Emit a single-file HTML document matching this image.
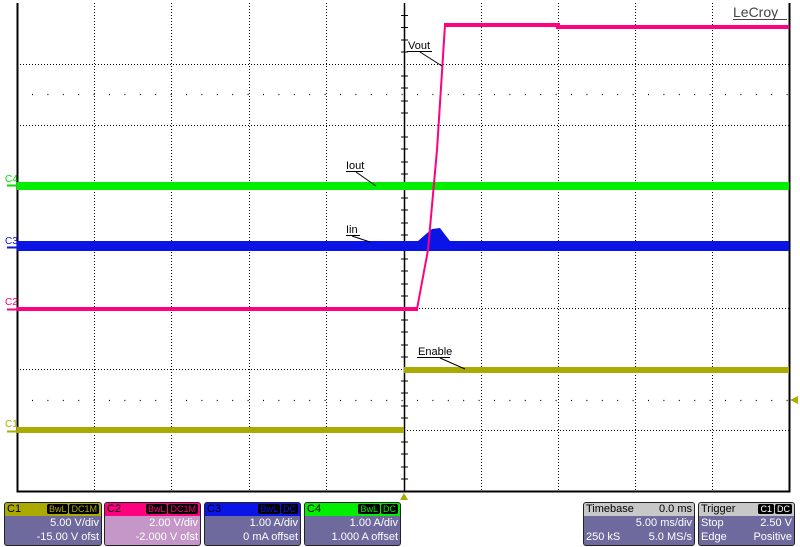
<!DOCTYPE html>
<html><head><style>
body{margin:0;width:800px;height:547px;background:#fff;overflow:hidden;font-family:"Liberation Sans",sans-serif;position:relative}
svg{position:absolute;left:0;top:0}
.p{position:absolute;top:502px;height:44px;border:1px solid #222;border-radius:3px;background:#6e6a9e;color:#fff;font-size:11px;box-sizing:border-box}
.h{height:13px;line-height:13px;padding-left:2px;color:#000;position:relative;border-radius:2px 2px 0 0}
.b{position:absolute;right:2px;top:1px;font-size:9px;line-height:10px}
.b span{background:#000;padding:0 2px;border-radius:2px;margin-left:1px}
.r{text-align:right;padding-right:2px;line-height:14px}
.l{position:absolute;left:2px}
</style></head><body>
<svg width="800" height="547" viewBox="0 0 800 547">
<g stroke="#000" stroke-width="1" stroke-dasharray="1,2" fill="none">
<path d="M94.5 3V491M171.5 3V491M249.5 3V491M326.5 3V491M481.5 3V491M558.5 3V491M635.5 3V491M712.5 3V491"/>
<path d="M17 64.5H789M17 125.5H789M17 186.5H789M17 308.5H789M17 369.5H789M17 430.5H789"/>
</g>
<g stroke="#000" stroke-width="1.3" stroke-dasharray="1,14.4" fill="none">
<path d="M32 94.5H789M32 400.5H789"/>
</g>
<path d="M17.5 3V491.5H789.5V3" stroke="#000" stroke-width="2" fill="none"/>
<path d="M404.5 3V491" stroke="#000" stroke-width="1.5"/>
<path d="M17 247.5H789" stroke="#000" stroke-width="1" stroke-dasharray="1,2"/>
<g stroke="#000" stroke-width="1">
<path d="M401 15.5h7M401 27.5h7M401 40h7M401 52h7M401 76h7M401 88h7M401 101h7M401 113h7M401 137h7M401 149h7M401 162h7M401 174h7M401 198h7M401 210h7M401 223h7M401 235h7M401 259h7M401 271h7M401 284h7M401 296h7M401 320h7M401 332h7M401 345h7M401 357h7M401 381h7M401 393h7M401 406h7M401 418h7M401 442h7M401 454h7M401 467h7M401 479h7"/>
</g>
<rect x="17" y="182" width="772" height="8" fill="#00ee00"/>
<rect x="17" y="241" width="772" height="10" fill="#0a14e6"/>
<path d="M418 241 L426 234 L432 229 L440 228 L446 236 L450 241 Z" fill="#0a14e6"/>
<rect x="17" y="427" width="387" height="6" fill="#aaaa00"/>
<rect x="404" y="367" width="385" height="6" fill="#aaaa00"/>
<path d="M17 309H418" stroke="#ff007f" stroke-width="4"/>
<path d="M417 309L428 250L437 150L445 25" stroke="#ff007f" stroke-width="2" fill="none"/>
<path d="M444 25H558V27H789" stroke="#ff007f" stroke-width="4" fill="none"/>
<g font-size="11" font-family="Liberation Sans,sans-serif" fill="#000">
<text x="408" y="49">Vout</text><path d="M407 51.5h25M420 52L442 66" stroke="#000"/>
<text x="346" y="169">Iout</text><path d="M346 171.5h17M356 172L376 186" stroke="#000"/>
<text x="346" y="233">Iin</text><path d="M346 235.5h14M352 236L370 242" stroke="#000"/>
<text x="418" y="355">Enable</text><path d="M417 357.5h33M440 358L465 369" stroke="#000"/>
</g>
<text x="733" y="17" font-size="14" fill="#444" font-family="Liberation Sans,sans-serif">LeCroy</text>
<path d="M733 19.5h54" stroke="#444"/>
<g font-size="10" font-family="Liberation Sans,sans-serif">
<text x="5" y="182" fill="#00dd00">C4</text><path d="M7 185.5h10" stroke="#00dd00" stroke-width="2"/>
<text x="5" y="244" fill="#0a14e6">C3</text><path d="M7 247.5h10" stroke="#0a14e6" stroke-width="2"/>
<text x="5" y="305" fill="#ff007f">C2</text><path d="M7 309.5h10" stroke="#ff007f" stroke-width="2"/>
<text x="5" y="427" fill="#aaaa00">C1</text><path d="M7 431.5h10" stroke="#aaaa00" stroke-width="2"/>
</g>
<path d="M790 400l8-4v8z" fill="#aaaa00"/>
<path d="M404 493l-4 7h8z" fill="#aaaa00"/>
</svg>
<div class="p" style="left:4px;width:98px"><div class="h" style="background:#aaaa00">C1<div class="b"><span style="color:#aaaa00">BwL</span><span style="color:#aaaa00">DC1M</span></div></div><div class="r">5.00 V/div</div><div class="r">-15.00 V ofst</div></div>
<div class="p" style="left:104px;width:97px;background:#c497c8"><div class="h" style="background:#ff007f">C2<div class="b"><span style="color:#ff007f">BwL</span><span style="color:#ff007f">DC1M</span></div></div><div class="r">2.00 V/div</div><div class="r">-2.000 V ofst</div></div>
<div class="p" style="left:204px;width:97px"><div class="h" style="background:#0a14e6">C3<div class="b"><span style="color:#0a14e6">BwL</span><span style="color:#0a14e6">DC</span></div></div><div class="r">1.00 A/div</div><div class="r">0 mA offset</div></div>
<div class="p" style="left:304px;width:97px"><div class="h" style="background:#00ee00">C4<div class="b"><span style="color:#00ee00">BwL</span><span style="color:#00ee00">DC</span></div></div><div class="r">1.00 A/div</div><div class="r">1.000 A offset</div></div>
<div class="p" style="left:583px;width:112px"><div class="h" style="background:#c8c8c8">Timebase<span style="position:absolute;right:2px">0.0 ms</span></div><div class="r">5.00 ms/div</div><div class="r"><span class="l">250 kS</span>5.0 MS/s</div></div>
<div class="p" style="left:698px;width:97px"><div class="h" style="background:#c8c8c8">Trigger<div class="b"><span style="color:#fff">C1</span><span style="color:#fff">DC</span></div></div><div class="r"><span class="l">Stop</span>2.50 V</div><div class="r"><span class="l">Edge</span>Positive</div></div>
</body></html>
